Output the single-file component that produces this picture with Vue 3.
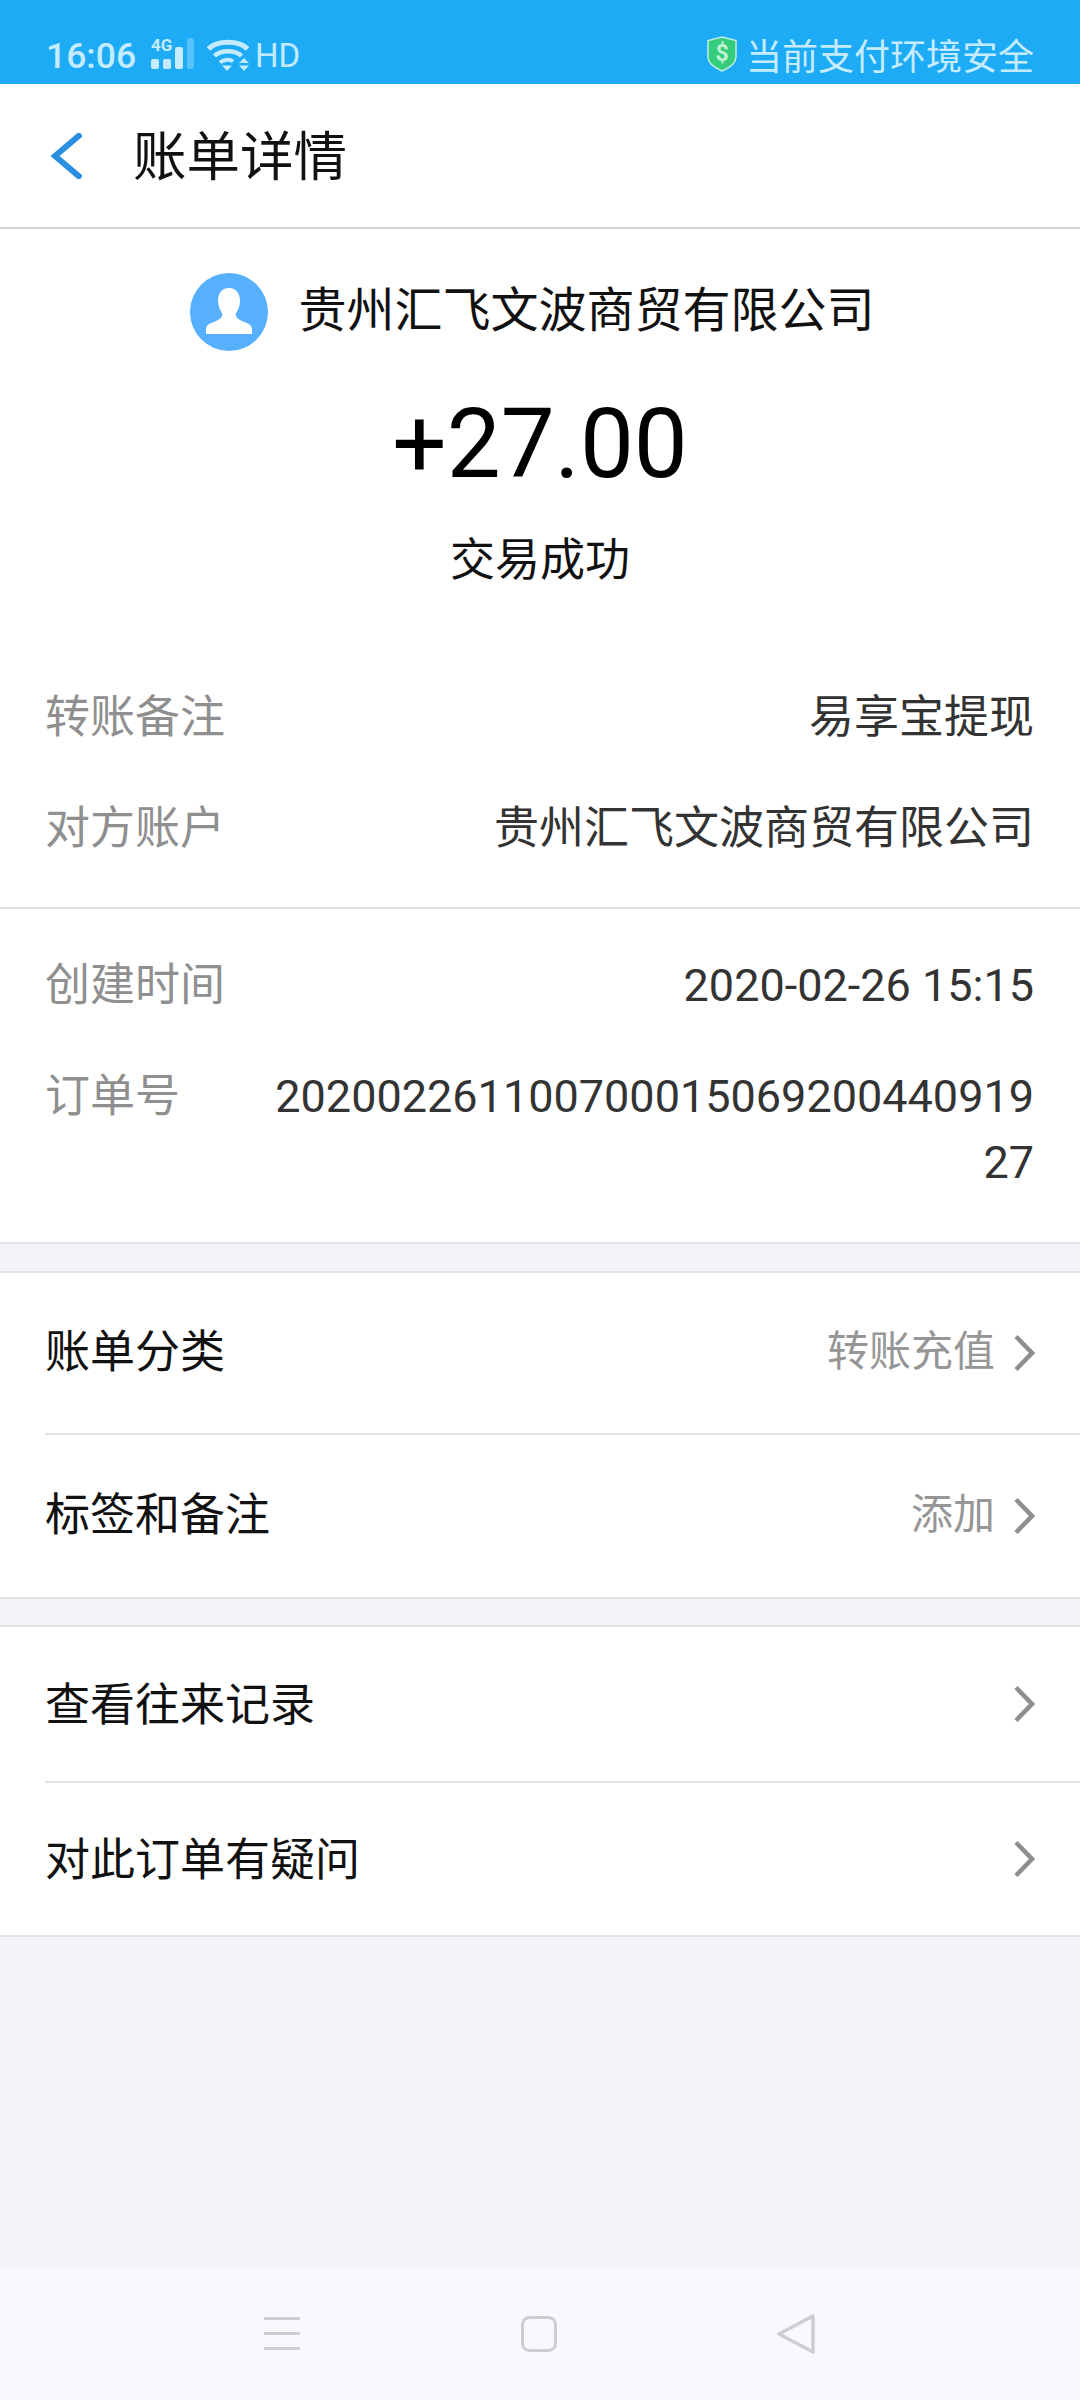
<script setup>
const infoTop = [
  { label: '转账备注', value: '易享宝提现' },
  { label: '对方账户', value: '贵州汇飞文波商贸有限公司' },
];
const infoBottom = [
  { label: '创建时间', value: '2020-02-26 15:15' },
  { label: '订单号', value: '20200226110070001506920044091927' },
];
const groups = [
  [
    { label: '账单分类', value: '转账充值' },
    { label: '标签和备注', value: '添加' },
  ],
  [
    { label: '查看往来记录', value: '' },
    { label: '对此订单有疑问', value: '' },
  ],
];
</script>

<template>
  <div class="page">
    <div class="status">
      <div class="status__left">
        <span class="status__time">16:06</span>
        <svg class="status__signal" width="44" height="35" viewBox="0 -4 44 35">
          <text x="0" y="13" class="status__net">4G</text>
          <rect x="0" y="21" width="8" height="10" rx="2" fill="#c4ebff" />
          <rect x="12" y="21" width="8" height="10" rx="2" fill="#c4ebff" />
          <rect x="24" y="9" width="8" height="22" rx="2" fill="#c4ebff" />
          <rect x="36" y="0" width="7" height="31" rx="2" fill="#c4ebff" opacity="0.35" />
        </svg>
        <svg class="status__wifi" width="42" height="33" viewBox="0 0 42 33">
          <path d="M1.500 11C10 2 32 2 40.500 11" fill="none" stroke="#c4ebff" stroke-width="5" />
          <path d="M7.500 18C14 11.500 28 11.500 34.500 18" fill="none" stroke="#c4ebff" stroke-width="4.500" />
          <path d="M13 24.500C17 21 23 21 26 23.500" fill="none" stroke="#c4ebff" stroke-width="4" />
          <path d="M15 27.500H25L20 33Z" fill="#c4ebff" />
          <path d="M32 25L37 20L42 25ZM32 27.500H42L37 33Z" fill="#c4ebff" />
        </svg>
        <span class="status__hd">HD</span>
      </div>
      <div class="status__right">
        <svg class="status__shield" width="30" height="36" viewBox="0 0 30 36">
          <path d="M15 1L29 4.500V21C29 27 22 32 15 35C8 32 1 27 1 21V4.500Z" fill="#35cc7b" stroke="#bfeee0" stroke-width="1.500" />
          <text x="15" y="25" text-anchor="middle" class="status__dollar">$</text>
        </svg>
        <span class="status__safe">当前支付环境安全</span>
      </div>
    </div>

    <header class="bar">
      <svg class="bar__back" width="31" height="46" viewBox="0 0 31 46">
        <path d="M30 1L4 23L30 45" fill="none" stroke="#2a8fe0" stroke-width="6" />
      </svg>
      <h1 class="bar__title">账单详情</h1>
    </header>

    <section class="detail">
      <div class="summary">
        <div class="summary__payee">
          <svg class="summary__avatar" width="78" height="78" viewBox="0 0 78 78">
            <circle cx="39" cy="39" r="39" fill="#56b0fd" />
            <path d="M39 15C31.500 15 28 21 28 28C28 33 30 37 32 40C33 43 31 45.500 27 47.500C22 50 16 51 16 56V61H62V56C62 51 56 50 51 47.500C47 45.500 45 43 46 40C48 37 50 33 50 28C50 21 46.500 15 39 15Z" fill="#fff" />
          </svg>
          <span class="summary__name">贵州汇飞文波商贸有限公司</span>
        </div>
        <div class="summary__amount">+27.00</div>
        <div class="summary__state">交易成功</div>
      </div>

      <div class="info info--top">
        <div v-for="row in infoTop" :key="row.label" class="info__row">
          <span class="info__label">{{ row.label }}</span>
          <span class="info__value">{{ row.value }}</span>
        </div>
      </div>
      <div class="info info--bottom">
        <div v-for="row in infoBottom" :key="row.label" class="info__row">
          <span class="info__label">{{ row.label }}</span>
          <span class="info__value">{{ row.value }}</span>
        </div>
      </div>
    </section>

    <section v-for="(group, i) in groups" :key="i" :class="['group', `group--${i}`]">
      <div v-for="item in group" :key="item.label" class="group__row">
        <div class="group__inner">
          <span class="group__label">{{ item.label }}</span>
          <span v-if="item.value" class="group__value">{{ item.value }}</span>
          <svg class="group__arrow" width="22" height="38" viewBox="0 0 22 38">
            <path d="M3 2.500L19 19L3 35.500" fill="none" stroke="#8e8e8e" stroke-width="4.500" />
          </svg>
        </div>
      </div>
    </section>

    <div class="spacer" />

    <nav class="nav">
      <svg width="36" height="34" viewBox="0 0 36 34">
        <rect x="0" y="0" width="36" height="3" fill="#cdced2" />
        <rect x="0" y="15" width="36" height="3" fill="#cdced2" />
        <rect x="0" y="30" width="36" height="3" fill="#cdced2" />
      </svg>
      <svg width="36" height="36" viewBox="0 0 36 36">
        <rect x="1.500" y="1.500" width="33" height="33" rx="7" fill="none" stroke="#cdced2" stroke-width="3" />
      </svg>
      <svg width="38" height="40" viewBox="0 0 38 40">
        <path d="M36 2L2 20L36 38Z" fill="none" stroke="#cdced2" stroke-width="3.500" stroke-linejoin="round" />
      </svg>
    </nav>
  </div>
</template>

<style>
html,
body {
  margin: 0;
  background: #f3f3f8;
}
</style>

<style scoped>
.page {
  display: flex;
  width: 1080px;
  height: 2400px;
  flex-direction: column;
  overflow: hidden;
  background: #f3f3f8;
  font-family: "Noto Sans CJK SC", Roboto, sans-serif;
  color: #111;
}

.status {
  display: flex;
  height: 84px;
  flex-shrink: 0;
  align-items: flex-end;
  justify-content: space-between;
  box-sizing: border-box;
  padding: 0 46px 8px;
  background: #1eabf6;
  color: #c4ebff;
}

.status__left,
.status__right {
  display: flex;
  align-items: center;
}

.status__time {
  font-family: Roboto, sans-serif;
  font-size: 35.500px;
  font-weight: 500;
  line-height: 40px;
}

.status__signal {
  margin: -4px 0 5px 15px;
}

.status__net {
  font-family: Roboto, sans-serif;
  font-size: 17px;
  font-weight: 700;
  fill: #c4ebff;
}

.status__wifi {
  margin: 0 0 3px 12px;
}

.status__hd {
  margin-left: 6px;
  font-family: Roboto, sans-serif;
  font-size: 33px;
  line-height: 40px;
}

.status__shield {
  margin-right: 9px;
}

.status__dollar {
  font-family: Roboto, sans-serif;
  font-size: 23px;
  font-weight: 700;
  fill: #c0f2d4;
}

.status__safe {
  font-size: 36px;
  line-height: 44px;
}

.bar {
  display: flex;
  height: 145px;
  flex-shrink: 0;
  align-items: center;
  box-sizing: border-box;
  padding-left: 51px;
  border-bottom: 2px solid #d2d2d2;
  background: #fff;
}

.bar__title {
  margin: 0 0 6px 51px;
  font-size: 53.500px;
  font-weight: 400;
  line-height: 70px;
}

.detail {
  flex-shrink: 0;
  height: 1015px;
  box-sizing: border-box;
  border-bottom: 2px solid #e2e2e6;
  background: #fff;
}

.summary {
  display: flex;
  flex-direction: column;
  align-items: center;
  padding-top: 43px;
}

.summary__payee {
  display: flex;
  align-items: center;
  height: 80px;
  gap: 30px;
  margin-right: 15px;
}

.summary__name {
  margin-bottom: 12px;
  font-size: 48px;
  line-height: 60px;
}

.summary__amount {
  margin-top: 37px;
  font-family: Roboto, sans-serif;
  font-size: 96px;
  line-height: 110px;
  color: #000;
}

.summary__state {
  margin-top: 28px;
  font-size: 45px;
  line-height: 60px;
}

.info {
  padding-left: 45px;
}

.info--top {
  margin-top: 95px;
  padding-bottom: 3px;
  border-bottom: 2px solid #e3e3e3;
}

.info--bottom {
  padding-top: 41px;
}

.info__row {
  display: flex;
  align-items: flex-start;
  justify-content: space-between;
  gap: 90px;
  padding-right: 46px;
  padding-bottom: 42px;
  font-size: 45px;
  line-height: 64px;
}

.info__label {
  flex-shrink: 0;
  color: #8f8f8f;
}

.info__value {
  min-width: 0;
  margin-top: 3px;
  color: #333;
  font-family: Roboto, "Noto Sans CJK SC", sans-serif;
  line-height: 66px;
  text-align: right;
  word-break: break-all;
}

.group {
  flex-shrink: 0;
  border-top: 2px solid #e2e2e6;
  border-bottom: 2px solid #e2e2e6;
  background: #fff;
}

.group--0 {
  margin-top: 27px;
}

.group--1 {
  margin-top: 26px;
}

.group__row {
  padding-left: 45px;
}

.group__inner {
  display: flex;
  align-items: center;
  box-sizing: border-box;
  padding-right: 45px;
  border-bottom: 2px solid #e3e3e3;
}

.group--0 .group__inner {
  height: 162px;
}

.group--1 .group__inner {
  height: 156px;
}

.group--1 .group__row:last-child .group__inner {
  height: 152px;
}

.group__row:last-child .group__inner {
  border-bottom: 0;
}

.group__label {
  flex: 1;
  margin-bottom: 5px;
  font-size: 45px;
  line-height: 60px;
}

.group--0 .group__label {
  margin-bottom: 8px;
}

.group__value {
  margin: 0 18px 11px 0;
  color: #969696;
  font-size: 42px;
  line-height: 60px;
}

.spacer {
  flex: 1;
}

.nav {
  display: flex;
  height: 132px;
  flex-shrink: 0;
  align-items: center;
  justify-content: space-between;
  box-sizing: border-box;
  padding: 0 265px 0 264px;
  background: #f8f9fd;
}
</style>
